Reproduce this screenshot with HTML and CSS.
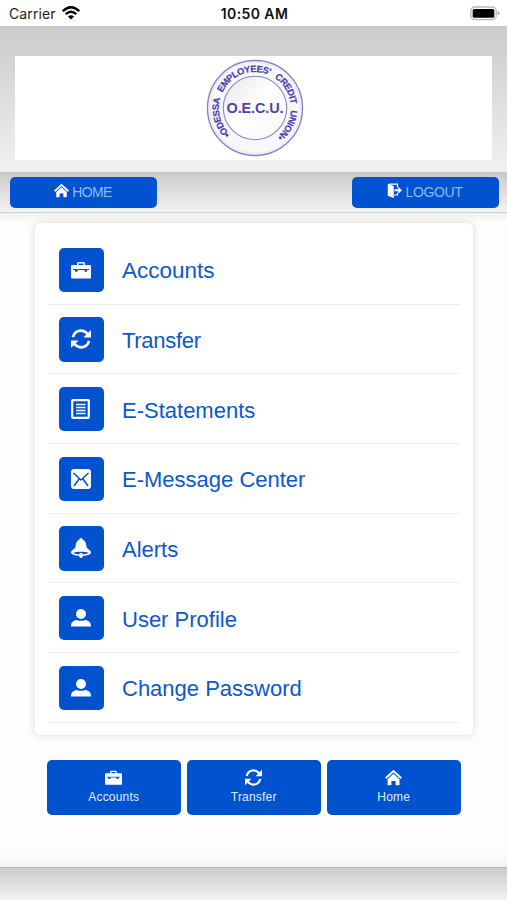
FILE: index.html
```
<!DOCTYPE html>
<html lang="en">
<head>
<meta charset="utf-8">
<title>O.E.C.U. Mobile</title>
<link rel="stylesheet" href="styles.css">
</head>
<body>
<svg class="defs" width="0" height="0">
  <symbol id="case" viewBox="0 0 20 20"><path fill="currentColor" fill-rule="evenodd" d="M1 5h5V3.500q0-1.500 1.500-1.500h5Q14 2 14 3.500V5h5q1 0 1 1v11.500q0 1-1 1H1q-1 0-1-1V6q0-1 1-1zM7.500 5h5V3.500h-5zM2 9v1h2v1.800h2.500V10h7v1.800H16V10h2V9z"/></symbol>
  <symbol id="cycle" viewBox="0 0 20 20"><g fill="none" stroke="currentColor" stroke-width="2.600"><path d="M2 8.200C4 .5 12.500-.2 16.700 5.200M18 11.800c-2 7.700-10.500 8.400-14.700 3"/></g><path fill="currentColor" d="M20 1v7.500h-7.600zM0 19v-7.500h7.600z"/></symbol>
  <symbol id="list" viewBox="0 0 20 20"><rect x="1.200" y="1.200" width="16.600" height="17.600" rx=".8" fill="none" stroke="currentColor" stroke-width="2.200"/><path d="M5 5.500h9.500M5 8.500h9.500M5 11.500h9.500M5 14.500h9.500" stroke="currentColor" stroke-width="1.700"/></symbol>
  <symbol id="mail" viewBox="0 0 20 20"><rect width="20" height="20" rx="3" fill="currentColor"/><path d="M2.500 4l7.500 7L17.500 4M3 17l5-7M17 17l-5-7" fill="none" stroke="#0450c8" stroke-width="1.500"/></symbol>
  <symbol id="bell" viewBox="0 0 20 20"><path fill="currentColor" fill-rule="evenodd" d="M10 0q1.500 0 1.700 1.500C15 3 15 6 15.400 8.500c.4 2.500 4.600 3.500 4.600 6 0 2-4 3.200-8 3.400Q11.500 20 10 20t-2-2.100c-4-.2-8-1.400-8-3.400 0-2.500 4.200-3.500 4.600-6C5 6 5 3 8.300 1.500Q8.500 0 10 0zM2.500 14.700c1.500 1 3.500 1.500 5.700 1.600q.2-1.300 1.800-1.300t1.800 1.300c2.200-.1 4.200-.6 5.700-1.600-4-1.400-11-1.400-15 0z"/></symbol>
  <symbol id="user" viewBox="0 0 20 20"><circle cx="10" cy="6" r="5" fill="currentColor"/><path fill="currentColor" d="M0 18.600c0-4.300 2-6 5.700-6.600q4.300 1.700 8.600 0c3.700.6 5.700 2.300 5.700 6.600z"/></symbol>
  <symbol id="house" viewBox="0 0 20 20"><path d="M.8 11L10 2.500l9.200 8.500" fill="none" stroke="currentColor" stroke-width="2.400"/><path fill="currentColor" d="M10 5.600l7 6.500V19h-4.500v-5h-5v5H3v-6.900z"/></symbol>
  <symbol id="exit" viewBox="0 0 20 20"><path fill="currentColor" d="M1 1l8 3v16l-8-3z"/><path d="M3 1.500h11V6M9 16h5v-3" fill="none" stroke="currentColor" stroke-width="1.600"/><path fill="currentColor" d="M10 8.300h5V5l5 4.600-5 4.600v-3.300h-5z"/></symbol>
</svg>

<div class="status">
  <div class="carrier"><span>Carrier</span>
    <svg width="18" height="14" viewBox="0 0 18 14"><g fill="none" stroke="#000" stroke-width="2.300"><path d="M.8 5.200Q9-2.800 17.200 5.200M3.700 8.200Q9 3.200 14.300 8.200"/></g><path d="M9 13.500L6 10.400q3-2.400 6 0z"/></svg>
  </div>
  <div class="time">10:50 AM</div>
  <div class="power">
    <svg width="31" height="15" viewBox="0 0 31 15"><rect x="1.800" y="1" width="25.400" height="12.600" rx="4" fill="#fff" stroke="#b9b9b9" stroke-width="1.300"/><rect x="3.700" y="2.900" width="21.600" height="8.900" rx="1.500"/><path d="M28.600 5q2 .8 2 2.300t-2 2.300z" fill="#aaa"/></svg>
  </div>
</div>

<header class="header">
  <div class="banner">
    <svg width="100" height="100" viewBox="0 0 100 100">
      <defs>
        <linearGradient id="seal" x1="0" y1="0" x2="1" y2="1"><stop offset="0" stop-color="#e6e6ec"/><stop offset=".5" stop-color="#fff"/><stop offset="1" stop-color="#f5f5f8"/></linearGradient>
        <path id="ring" d="M25.300 76.300A36 36 0 1 1 70.200 79.800"/>
      </defs>
      <circle cx="50" cy="50" r="47.500" fill="#f8f8fb" stroke="#8a80c8" stroke-width="1.400"/>
      <circle cx="50" cy="50" r="45.500" fill="none" stroke="#dcd9ee" stroke-width=".6"/>
      <circle cx="50" cy="50" r="31.700" fill="url(#seal)" stroke="#8e85ca" stroke-width="1.100"/>
      <text class="seal-ring"><textPath href="#ring" textLength="175">•ODESSA EMPLOYEES' CREDIT UNION•</textPath></text>
      <text class="seal-name" x="21.500" y="55" textLength="57" lengthAdjust="spacing">O.E.C.U.</text>
    </svg>
  </div>
</header>

<nav class="nav">
  <a class="nav-btn"><svg class="nav-icon"><use href="#house"/></svg><span class="home-label">HOME</span></a>
  <a class="nav-btn"><svg class="nav-icon"><use href="#exit"/></svg><span>LOGOUT</span></a>
</nav>

<main class="main">
  <div class="card">
    <a class="row"><span class="tile"><svg><use href="#case"/></svg></span><span class="label wide">Accounts</span></a>
    <a class="row"><span class="tile"><svg><use href="#cycle"/></svg></span><span class="label snug">Transfer</span></a>
    <a class="row"><span class="tile"><svg><use href="#list"/></svg></span><span class="label">E-Statements</span></a>
    <a class="row"><span class="tile"><svg><use href="#mail"/></svg></span><span class="label">E-Message Center</span></a>
    <a class="row"><span class="tile"><svg><use href="#bell"/></svg></span><span class="label">Alerts</span></a>
    <a class="row"><span class="tile"><svg><use href="#user"/></svg></span><span class="label">User Profile</span></a>
    <a class="row"><span class="tile"><svg><use href="#user"/></svg></span><span class="label">Change Password</span></a>
  </div>
  <div class="shortcuts">
    <a class="shortcut"><svg><use href="#case"/></svg><span>Accounts</span></a>
    <a class="shortcut"><svg><use href="#cycle"/></svg><span>Transfer</span></a>
    <a class="shortcut"><svg><use href="#house"/></svg><span>Home</span></a>
  </div>
</main>
<footer class="footer"></footer>
</body>
</html>
```
FILE: styles.css
```
* { box-sizing: border-box; }
body {
  margin: 0;
  height: 900px;
  display: flex;
  flex-direction: column;
  overflow: hidden;
  background: #fdfdfd;
  font-family: "Liberation Sans", Arial, sans-serif;
}
svg { display: block; flex: none; }
.defs { position: absolute; }
.status {
  flex: none;
  height: 25.500px;
  padding: 1px 7px 0 9px;
  display: grid;
  grid-template-columns: 1fr auto 1fr;
  align-items: center;
  background: #fff;
  font-family: Inter, sans-serif;
  font-size: 14px;
  color: #222;
}
.carrier { display: flex; align-items: center; gap: 6px; }
.carrier span { letter-spacing: .1px; padding-top: 1px; }
.time { font-weight: 600; font-size: 14px; letter-spacing: .4px; color: #111; padding-top: 1px; }
.power { justify-self: end; }
.header {
  flex: none;
  height: 146.500px;
  padding: 30.500px 15px 12px;
  background: linear-gradient(#cbcbcb, #f1f1f1);
}
.banner {
  height: 104px;
  display: flex;
  justify-content: center;
  align-items: center;
  background: #fff;
  padding-left: 2px;
}
.seal-ring { font-size: 9.300px; font-weight: bold; word-spacing: 4px; fill: #4a3fae; stroke: #4a3fae; stroke-width: .2; }
.seal-name { font-size: 14.500px; font-weight: bold; fill: #5046a8; }
.nav {
  flex: none;
  height: 40.500px;
  padding: 3.500px 8.500px 0 9.500px;
  display: flex;
  justify-content: space-between;
  border-top: 1px solid #c6c6c6;
  border-bottom: 1px solid #cfcfcf;
  background: linear-gradient(#cbcbcb, #f3f3f3);
}
.nav-btn {
  width: 147px;
  height: 31.500px;
  display: flex;
  justify-content: center;
  align-items: center;
  gap: 3px;
  border-radius: 5px;
  background: #0052cf;
  color: #8dbcf8;
  font-size: 14px;
}
.nav-btn span { letter-spacing: -.35px; }
.nav-btn .home-label { letter-spacing: -.6px; }
.nav-icon { width: 15px; height: 15px; color: #fff; margin-top: -3px; }
.main {
  flex: none;
  height: 654.500px;
  padding: 10.500px 34.500px 0 35px;
  background: linear-gradient(#f0f0f0, #fdfdfd 9px, #fdfdfd 640px, #f2f2f2);
}
.card {
  height: 512px;
  padding: 12px 12.500px 0 13.500px;
  border-radius: 6px;
  background: #fff;
  box-shadow: 0 0 8px rgba(0, 0, 0, .15);
}
.row {
  height: 69.670px;
  padding-left: 10.500px;
  padding-top: 1px;
  display: flex;
  align-items: center;
  gap: 18.500px;
  border-bottom: 1.500px solid #ededed;
}
.tile {
  width: 44.500px;
  height: 44.500px;
  display: flex;
  align-items: center;
  justify-content: center;
  border-radius: 5px;
  background: #0052cf;
  color: #fff;
}
.tile svg { width: 20px; height: 20px; }
.label { font-size: 22px; color: #0c58cc; padding-top: 3px; }
.wide { font-size: 22.500px; }
.snug { letter-spacing: -.3px; }
.shortcuts {
  margin: 24.500px 12px 0;
  display: grid;
  grid-template-columns: repeat(3, 1fr);
  gap: 6.500px;
}
.shortcut {
  height: 55px;
  padding-top: 9px;
  display: flex;
  flex-direction: column;
  align-items: center;
  gap: 4px;
  border-radius: 5px;
  background: #0052cf;
  color: #fff;
  font-size: 12px;
}
.shortcut svg { width: 17px; height: 17px; }
.shortcut span { letter-spacing: .2px; color: #e2edff; }
.footer {
  flex: 1;
  border-top: 1px solid #b8b8b8;
  background: linear-gradient(#cbcbcb, #f3f3f3);
}
```
